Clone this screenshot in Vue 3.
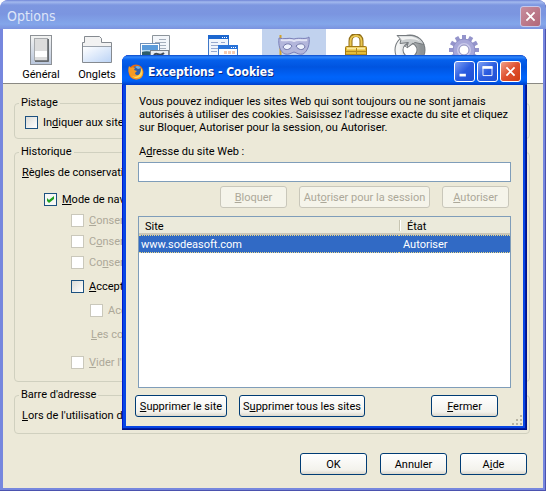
<script setup>
import { ref } from "vue";

const tabs = ["general", "tabs", "content", "apps", "privacy", "security", "sync", "advanced"];
const activeTab = ref("privacy");

// label = [before, access key, after]
const history = ref([
  { id: "mode", label: ["", "M", "ode de nav"], cls: "lvl1", on: true },
  { id: "pages", label: ["", "C", "onser"], cls: "lvl2", off: true },
  { id: "downloads", label: ["C", "o", "nser"], cls: "lvl2", off: true },
  { id: "forms", label: ["Co", "n", "ser"], cls: "lvl2", off: true },
  { id: "accept", label: ["", "A", "ccept"], cls: "lvl2 space" },
  { id: "third", label: ["Acc", "", ""], cls: "lvl3 space", off: true },
]);
const track = ref(false);
const clear = ref(false);

const address = ref("");
const sites = ref([{ host: "www.sodeasoft.com", status: "Autoriser" }]);
const selected = ref("www.sodeasoft.com");
</script>

<template>
  <div class="window">
    <header class="titlebar">
      <h1>Options</h1>
      <button class="win-btn close" type="button" aria-label="Close">
        <svg viewBox="0 0 21 21"><path d="M6 6l9 9M15 6l-9 9" /></svg>
      </button>
    </header>

    <nav class="toolbar">
      <button
        v-for="t in tabs"
        :key="t"
        type="button"
        class="tab"
        :class="[t, { active: activeTab === t }]"
        :aria-label="t"
        @click="activeTab = t"
      >
        <svg v-if="t === 'general'" viewBox="0 0 32 32">
          <defs>
            <linearGradient id="gen" x2="0" y2="1">
              <stop offset="0" stop-color="#f4f4f2" />
              <stop offset="1" stop-color="#b9c6dc" />
            </linearGradient>
          </defs>
          <rect x="5.500" y="1.500" width="21" height="29" fill="url(#gen)" stroke="#8d9196" />
          <rect x="10" y="5" width="14" height="23" fill="#7d8083" />
          <rect x="9.500" y="4.500" width="13" height="22" fill="#dcdcdc" stroke="#a8abae" />
          <rect x="10" y="17" width="12" height="6" fill="#fff" />
          <path d="M23 5v22H10" fill="none" stroke="#53575c" />
        </svg>
        <svg v-else-if="t === 'tabs'" viewBox="0 0 32 32">
          <defs>
            <linearGradient id="tb" x2="1" y2="1">
              <stop offset="0" stop-color="#fff" />
              <stop offset="1" stop-color="#bcd4f6" />
            </linearGradient>
          </defs>
          <path d="M1.500 28.500v-20h2v-6h15l2 2v4h10v20z" fill="#f2f2f2" stroke="#858a90" />
          <path d="M2 13h28v15H2z" fill="url(#tb)" />
          <path d="M2 12.500h28" stroke="#9ba3ad" />
        </svg>
        <svg v-else-if="t === 'content'" viewBox="0 0 32 32">
          <path d="M13.500 1.500h17v28h-17z" fill="#f3f6fa" stroke="#8c949b" />
          <path d="M20 5.500h7M16 8.500h11M16 11.500h11M16 14.500h11" stroke="#a4aebb" />
          <rect x="1.500" y="9.500" width="19" height="16" fill="#fff" stroke="#6f90b9" />
          <path d="M3 11h16v5H3z" fill="#5b9bda" />
          <path d="M3 16h16v2H3z" fill="#b8d9ee" />
          <path d="M3 18c5-2 10 0 16 1v5H3z" fill="#2f5e69" />
          <rect x="11.500" y="16.500" width="18" height="13" fill="#e9edf1" stroke="#7b848d" />
          <path d="M15 21c3-4 5 3 10-2" fill="none" stroke="#3f4a55" stroke-width="2" />
        </svg>
        <svg v-else-if="t === 'apps'" viewBox="0 0 32 32">
          <rect x="1.500" y="1.500" width="20" height="26" fill="#f1f5fc" stroke="#3f78c8" />
          <path d="M1 1h21v4H1z" fill="#1c67cf" />
          <path d="M15 3.500h1M17 3.500h1M19 3.500h1" stroke="#fff" />
          <path d="M4 8.500h7M4 11.500h9M4 14.500h8M4 17.500h6M14 8.500h4" stroke="#98a9ce" />
          <rect x="11.500" y="11.500" width="19" height="18" fill="#fff" stroke="#3f78c8" />
          <path d="M11 11h20v4H11z" fill="#2872d8" />
          <path d="M24 13.500h1M26 13.500h1M28 13.500h1" stroke="#fff" />
          <path d="M17 17h3v3h-3zM21 17h3v3h-3zM25 17h3v3h-3zM14 21h14v3H14z" fill="#f5ccb1" />
        </svg>
        <svg v-else-if="t === 'privacy'" viewBox="0 0 32 32">
          <path d="M2.500 1v29" stroke="#d3a32a" stroke-width="2" />
          <path
            d="M1 4c5 2 9-1 15 1 6-2 11 1 15-2 1 7-1 14-6 17-4 1-6-1-9-2-3 1-5 3-9 2C2 18 0 11 1 4z"
            fill="#b3b6db"
            stroke="#7b80b8"
          />
          <path d="M3 6c5 1 9-1 13 1 4-2 9 0 13-1" fill="none" stroke="#e2e4f5" stroke-width="2" />
          <path
            d="M5 13c2-4 7-4 9-1-2 4-7 5-9 1zM18 12c3-3 8-3 9 1-2 4-7 3-9-1z"
            fill="#eef2fd"
            stroke="#7075a8"
          />
        </svg>
        <svg v-else-if="t === 'security'" viewBox="0 0 32 32">
          <path d="M10.500 14V7c0-8 11-8 11 0v7" fill="none" stroke="#926f16" stroke-width="4" />
          <path d="M10.500 14V7c0-7 11-7 11 0v7" fill="none" stroke="#e9c752" stroke-width="2" />
          <rect x="5.500" y="12.500" width="21" height="18" rx="1" fill="#e5bc38" stroke="#a17915" />
          <path d="M7 14.500h18" stroke="#fbeba3" stroke-width="2" />
          <path d="M6 17.500h20M6 20.500h20M16.500 14v6" stroke="#b68b1c" />
        </svg>
        <svg v-else-if="t === 'sync'" viewBox="0 0 32 32">
          <defs>
            <linearGradient id="syn" x2="1" y2="0">
              <stop offset="0" stop-color="#f4f5f5" />
              <stop offset="1" stop-color="#8d9295" />
            </linearGradient>
          </defs>
          <circle cx="16" cy="16" r="11" fill="none" stroke="#757a7e" stroke-width="9" />
          <circle cx="16" cy="16" r="11" fill="none" stroke="url(#syn)" stroke-width="7" />
          <path d="M3 1.500h15c6 1 10 4 12 9l-9-2-8 5 1-5-8 1 1-4z" fill="#c9cdcf" stroke="#757a7e" />
          <path d="M5 2.500h12c4 1 7 2 9 5-6-3-12-3-18-1z" fill="#f0f1f1" />
          <path d="M11 13l3-5-1 6 6-5" fill="#dfe1e2" stroke="#757a7e" />
        </svg>
        <svg v-else viewBox="0 0 32 32">
          <g stroke="#9494cb" stroke-width="4">
            <path d="M16 1v30M1 16h30M8.500 3l15 26M3 8.500l26 15M3 23.500l26-15M8.500 29l15-26" />
          </g>
          <circle cx="16" cy="16" r="11" fill="#a7a7d8" stroke="#8f8fc6" />
          <circle cx="16" cy="16" r="7" fill="#c9c9e9" />
          <circle cx="16" cy="16" r="5" fill="#fff" stroke="#8d8dbd" />
        </svg>
        <span v-if="t === 'general'">Général</span>
        <span v-if="t === 'tabs'">Onglets</span>
      </button>
    </nav>

    <main class="pane">
      <fieldset>
        <legend>Pistage</legend>
        <label class="row track"><input v-model="track" type="checkbox" />In<u>d</u>iquer aux site</label>
      </fieldset>

      <fieldset>
        <legend>Historique</legend>
        <p class="row rules"><u>R</u>ègles de conservati</p>
        <label v-for="h in history" :key="h.id" class="row" :class="[h.cls, { off: h.off }]">
          <input v-model="h.on" type="checkbox" :disabled="h.off" />
          <span>{{ h.label[0] }}<u>{{ h.label[1] }}</u>{{ h.label[2] }}</span>
        </label>
        <p class="row keep off"><u>L</u>es co</p>
        <label class="row lvl2 clear off">
          <input v-model="clear" type="checkbox" disabled /><span><u>V</u>ider l'h</span>
        </label>
      </fieldset>

      <fieldset>
        <legend>Barre d'adresse</legend>
        <p class="row bar"><u>L</u>ors de l'utilisation de</p>
      </fieldset>

      <footer class="actions">
        <button class="btn" type="button">OK</button>
        <button class="btn" type="button">Annuler</button>
        <button class="btn" type="button">A<u>i</u>de</button>
      </footer>
    </main>

    <section class="dialog" role="dialog" aria-labelledby="dlg-title">
      <header class="dialog-title">
        <svg class="fox" viewBox="0 0 16 16">
          <circle cx="8" cy="8" r="7.500" fill="#e66a12" />
          <circle cx="9" cy="7" r="5" fill="#2d5fae" />
          <path d="M7 3c2-2 5-1 6 1l-3 1z" fill="#6fb2e6" />
          <path
            d="M1 2l2 2c1-1 3-1 4 0L6 6l3 1-2 2c0 2 3 3 5 1 2-2 1-5 0-7 4 3 4 8 1 11-4 3-10 1-11-3C0 7 0 5 1 2z"
            fill="#f59a23"
          />
          <path d="M13 4c2 3 2 7-1 9-3 2-6 1-8-1 4 2 9 0 9-8z" fill="#fcd75a" />
        </svg>
        <h2 id="dlg-title">Exceptions - Cookies</h2>
        <button class="win-btn" type="button" aria-label="Minimize">
          <svg viewBox="0 0 21 21"><path d="M5 14.500h7" /></svg>
        </button>
        <button class="win-btn" type="button" aria-label="Maximize">
          <svg viewBox="0 0 21 21">
            <path class="thin" d="M5.500 5v10h10V5" /><path d="M5 6h11" />
          </svg>
        </button>
        <button class="win-btn close" type="button" aria-label="Close">
          <svg viewBox="0 0 21 21"><path d="M6 6l9 9M15 6l-9 9" /></svg>
        </button>
      </header>

      <div class="dialog-body">
        <p class="intro">
          Vous pouvez indiquer les sites Web qui sont toujours ou ne sont jamais<br />
          autorisés à utiliser des cookies. Saisissez l'adresse exacte du site et cliquez<br />
          sur Bloquer, Autoriser pour la session, ou Autoriser.
        </p>
        <label class="addr-label" for="addr">A<u>d</u>resse du site Web :</label>
        <input id="addr" v-model="address" class="addr" type="text" />

        <div class="permits">
          <button class="btn" type="button" :disabled="!address"><u>B</u>loquer</button>
          <button class="btn wide" type="button" :disabled="!address">Aut<u>o</u>riser pour la session</button>
          <button class="btn" type="button" :disabled="!address"><u>A</u>utoriser</button>
        </div>

        <div class="list">
          <table>
            <thead>
              <tr>
                <th>Site</th>
                <th class="status">État</th>
              </tr>
            </thead>
            <tbody>
              <tr
                v-for="s in sites"
                :key="s.host"
                :class="{ selected: selected === s.host }"
                @click="selected = s.host"
              >
                <td>{{ s.host }}</td>
                <td>{{ s.status }}</td>
              </tr>
            </tbody>
          </table>
        </div>

        <div class="dialog-actions">
          <button class="btn remove" type="button"><u>S</u>upprimer le site</button>
          <button class="btn remove-all" type="button">S<u>u</u>pprimer tous les sites</button>
          <button class="btn end" type="button"><u>F</u>ermer</button>
        </div>
        <svg class="grip" viewBox="0 0 12 12">
          <path
            d="M9 1h2v2H9zM5 5h2v2H5zM9 5h2v2H9zM1 9h2v2H1zM5 9h2v2H5zM9 9h2v2H9z"
            fill="#b8b4a3"
          />
        </svg>
      </div>
    </section>
  </div>
</template>

<style>
body {
  background: #fff;
}
</style>

<style scoped>
* {
  box-sizing: border-box;
}

.window {
  position: relative;
  min-height: 100vh;
  padding: 0 3px 3px;
  border-radius: 8px 8px 0 0;
  background: #7687de;
  box-shadow: inset -1px -1px 0 #4b52ae;
  font: 11px/13px Tahoma, Roboto, "Liberation Sans", sans-serif;
  color: #000;
  white-space: nowrap;
  display: flex;
  flex-direction: column;
  overflow: hidden;
}

h1,
h2,
p {
  margin: 0;
}

button,
input {
  font: inherit;
  margin: 0;
}

u {
  text-underline-offset: 1px;
}

.titlebar {
  display: flex;
  align-items: center;
  justify-content: space-between;
  height: 29px;
  margin: 0 -3px;
  padding: 3px 5px 0 7px;
  border-radius: 8px 8px 0 0;
  background: linear-gradient(#6f84d6, #a3b9ee 2px, #7d97e0 5px, #7b95e0 14px, #83a6ea 24px, #7b93df);
}

h1 {
  font: 14px/18px "DejaVu Sans Condensed", "DejaVu Sans", sans-serif;
  color: #dde5f8;
}

.win-btn {
  width: 21px;
  height: 21px;
  padding: 0;
  border: 1px solid #fff;
  border-radius: 3px;
  background: linear-gradient(135deg, #7ea0f4, #2b5ce0 50%, #1f50d4);
}

.win-btn svg {
  display: block;
  width: 19px;
  height: 19px;
  fill: none;
  stroke: #fff;
  stroke-width: 3;
}

.win-btn .thin {
  stroke-width: 1;
}

.win-btn.close {
  background: linear-gradient(135deg, #f0a088, #df5030 50%, #d13c12);
}

.win-btn.close svg {
  stroke-width: 2;
}

.titlebar .win-btn.close {
  border-color: #c6c8ea;
  background: linear-gradient(135deg, #c78d9d, #b26779);
}

.toolbar {
  display: flex;
  height: 55px;
  padding-left: 11px;
  background: #fff;
  border-bottom: 1px solid #8a8983;
}

.tab {
  display: flex;
  flex-direction: column;
  align-items: center;
  width: 58px;
  padding: 5px 0 0;
  border: 0;
  background: none;
  color: #000;
}

.tab svg {
  width: 32px;
  height: 32px;
}

.tab span {
  margin-top: 2px;
}

.tab.general {
  width: 54px;
}

.tab.apps {
  width: 78px;
}

.tab.privacy {
  width: 64px;
}

.tab.security,
.tab.advanced {
  width: 60px;
}

.tab.sync {
  width: 48px;
}

.tab.active {
  background: #c1d2ee;
}

.pane {
  flex: 1;
  display: flex;
  flex-direction: column;
  gap: 6px;
  padding: 12px 13px 13px 11px;
  background: #ece9d8;
}

fieldset {
  min-width: 0;
  margin: 0;
  padding: 0 7px;
  border: 1px solid #d0d0bf;
  border-radius: 4px;
}

legend {
  height: 14px;
  margin-left: -3px;
  padding: 0 2px;
}

.row {
  display: flex;
  align-items: center;
  height: 13px;
  margin-top: 8px;
}

.row input {
  appearance: none;
  width: 13px;
  height: 13px;
  margin-right: 5px;
  border: 1px solid #1c5180;
  background: linear-gradient(135deg, #dcdcd7, #fff);
}

.row input:checked {
  background: #f7f7f5
    url("data:image/svg+xml,%3Csvg xmlns='http://www.w3.org/2000/svg' viewBox='0 0 11 11'%3E%3Cpath d='M2 4v3l2 2 5-4V2L4 6z' fill='%2321a121'/%3E%3C/svg%3E");
}

.row input:disabled {
  border-color: #cac8bb;
  background: #fff;
}

.off {
  color: #aca899;
}

.track {
  margin: 6px 0 9px 3px;
}

.rules {
  margin: 7px 0 14px;
}

.lvl1 {
  margin: 0 0 0 22px;
}

.lvl2 {
  margin-left: 49px;
}

.lvl3 {
  margin-left: 68px;
}

.space {
  margin-top: 11px;
}

.keep {
  margin: 11px 0 0 69px;
}

.clear {
  margin-top: 15px;
  margin-bottom: 12px;
}

.bar {
  margin: 7px 0 11px;
}

.actions {
  display: flex;
  justify-content: flex-end;
  gap: 13px;
  margin-top: auto;
  padding-right: 3px;
}

.btn {
  width: 67px;
  height: 22px;
  padding: 0;
  border: 1px solid #003c74;
  border-radius: 3px;
  background: linear-gradient(#fff, #f3f2ec 80%, #dcd8cd);
  color: #000;
}

.btn:disabled {
  border-color: #c9c7ba;
  background: #f5f4ea;
  color: #aca899;
}

.dialog {
  position: absolute;
  top: 55px;
  left: 122px;
  right: 19px;
  padding: 0 4px 4px;
  border-radius: 7px 7px 0 0;
  background: #0846e4;
  box-shadow: inset -1px -1px 0 #00138c, inset -2px -2px 0 #001ea0, inset 1px 0 0 #0019cf;
}

.dialog-title {
  display: flex;
  align-items: center;
  gap: 2px;
  height: 30px;
  margin: 0 -4px;
  padding: 3px 6px 0;
  border-radius: 7px 7px 0 0;
  background: linear-gradient(#0a48c8, #2f86fc 2px, #0560ec 5px, #0054e0 12px, #0064fb 22px, #0061f5 26px, #003dc8);
}

.fox {
  width: 16px;
  height: 16px;
}

h2 {
  flex: 1;
  padding-left: 2px;
  font: bold 12px/18px "DejaVu Sans Condensed", "DejaVu Sans", sans-serif;
  color: #fff;
  text-shadow: 1px 1px 0 #0a2a86;
}

.dialog-body {
  position: relative;
  padding: 10px 12px 9px;
  background: #ece9d8;
}

.intro {
  padding-left: 1px;
}

.addr-label {
  display: block;
  margin: 11px 0 4px 1px;
}

.addr {
  display: block;
  width: 100%;
  height: 20px;
  padding: 0 3px;
  border: 1px solid #7f9db9;
  background: #fff;
  outline: 0;
}

.permits {
  display: flex;
  justify-content: flex-end;
  gap: 12px;
  padding: 4px 2px 8px 0;
}

.btn.wide {
  width: 131px;
}

.list {
  height: 172px;
  border: 1px solid #7f9db9;
  background: #fff;
}

table {
  width: 100%;
  border-collapse: separate;
  border-spacing: 0;
  table-layout: fixed;
}

th {
  height: 18px;
  padding: 2px 6px 0;
  border-bottom: 2px solid #cbc7b8;
  background: #ebeadb;
  font-weight: normal;
  text-align: left;
}

.status {
  width: 111px;
  padding-left: 8px;
  background: linear-gradient(#c7c5b2, #c7c5b2) 0 3px / 1px 11px no-repeat, linear-gradient(#fff, #fff) 1px 3px / 1px
      11px no-repeat, #ebeadb;
}

td {
  height: 18px;
  padding: 1px 2px 0;
}

td + td {
  padding-left: 4px;
}

.selected td {
  border: 1px dotted #e8d98a;
  border-width: 1px 0;
  background: #316ac5;
  color: #fff;
}

.dialog-actions {
  display: flex;
  gap: 12px;
  margin: 7px 13px 0 -3px;
}

.btn.remove {
  width: 92px;
}

.btn.remove-all {
  width: 126px;
}

.end {
  margin-left: auto;
}

.grip {
  position: absolute;
  right: 0;
  bottom: 0;
  width: 12px;
  height: 12px;
}
</style>
